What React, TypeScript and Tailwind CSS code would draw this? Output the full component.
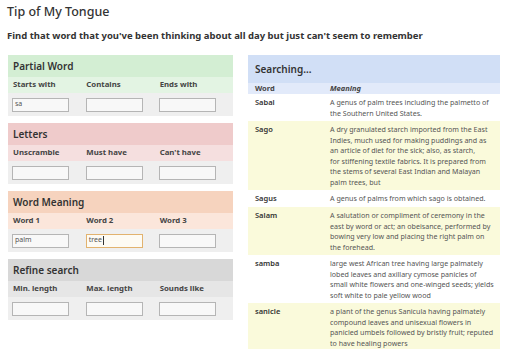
import React from "react";

type Field = { label: string; value?: string; focused?: boolean };
type Panel = { title: string; head: string; sub: string; fields: Field[] };

const panels: Panel[] = [
  {
    title: "Partial Word",
    head: "bg-[#d3eed3]",
    sub: "bg-[#e3f4e3]",
    fields: [{ label: "Starts with", value: "sa" }, { label: "Contains" }, { label: "Ends with" }],
  },
  {
    title: "Letters",
    head: "bg-[#efcbcb]",
    sub: "bg-[#f5dfdf]",
    fields: [{ label: "Unscramble" }, { label: "Must have" }, { label: "Can't have" }],
  },
  {
    title: "Word Meaning",
    head: "bg-[#f6d3be]",
    sub: "bg-[#fbe6db]",
    fields: [
      { label: "Word 1", value: "palm" },
      { label: "Word 2", value: "tree", focused: true },
      { label: "Word 3" },
    ],
  },
  {
    title: "Refine search",
    head: "bg-[#d8d8d8]",
    sub: "bg-[#e6e6e6]",
    fields: [{ label: "Min. length" }, { label: "Max. length" }, { label: "Sounds like" }],
  },
];

// lines kept as they wrap in the original table
const results = [
  { word: "Sabal", lines: ["A genus of palm trees including the palmetto of", "the Southern United States."] },
  {
    word: "Sago",
    lines: [
      "A dry granulated starch imported from the East",
      "Indies, much used for making puddings and as",
      "an article of diet for the sick; also, as starch,",
      "for stiffening textile fabrics. It is prepared from",
      "the stems of several East Indian and Malayan",
      "palm trees, but",
    ],
  },
  { word: "Sagus", lines: ["A genus of palms from which sago is obtained."] },
  {
    word: "Salam",
    lines: [
      "A salutation or compliment of ceremony in the",
      "east by word or act; an obeisance, performed by",
      "bowing very low and placing the right palm on",
      "the forehead.",
    ],
  },
  {
    word: "samba",
    lines: [
      "large west African tree having large palmately",
      "lobed leaves and axillary cymose panicles of",
      "small white flowers and one-winged seeds; yields",
      "soft white to pale yellow wood",
    ],
  },
  {
    word: "sanicle",
    lines: [
      "a plant of the genus Sanicula having palmately",
      "compound leaves and unisexual flowers in",
      "panicled umbels followed by bristly fruit; reputed",
      "to have healing powers",
    ],
  },
];

function SearchPanel({ p }: { p: Panel }) {
  return (
    <div className="mb-[7px]">
      <div className={`${p.head} h-[22px] flex items-center px-[5px] text-[10px] font-semibold text-[#333]`}>
        {p.title}
      </div>
      <div className={`${p.sub} h-[16px] flex items-center pl-[5px] text-[7.8px] font-bold text-[#444]`}>
        {p.fields.map((f) => (
          <span key={f.label} className="w-[75px]">
            {f.label}
          </span>
        ))}
      </div>
      <div className="bg-[#efefef] h-[23px] flex items-center pl-[4px]">
        {p.fields.map((f) => (
          <div key={f.label} className="w-[75px]">
            <div
              className={`w-[57px] h-[14px] border flex items-center px-[2px] text-[7px] text-[#555] ${
                f.focused ? "border-[#e2b36f] bg-[#fdfbf4]" : "border-[#b5b5b5] bg-[#f8f8f8]"
              }`}
            >
              {f.value}
              {f.focused && <span className="w-px h-[9px] bg-[#333] ml-px" />}
            </div>
          </div>
        ))}
      </div>
    </div>
  );
}

export default function App() {
  return (
    <div className="w-[512px] h-[349px] overflow-hidden bg-white font-['Noto_Sans',sans-serif] text-[#333]">
      <h1 className="pl-[7px] pt-[3px] text-[12.5px] leading-[18px] font-medium text-[#333]">Tip of My Tongue</h1>
      <p className="pl-[7px] mt-[9px] text-[9.5px] leading-[12px] font-bold text-[#333]">
        Find that word that you've been thinking about all day but just can't seem to remember
      </p>
      <div className="flex mt-[13px]">
        <div className="w-[225px] ml-[8px]">
          {panels.map((p) => (
            <SearchPanel key={p.title} p={p} />
          ))}
        </div>
        <div className="w-[252px] ml-[15px]">
          <div className="bg-[#d1dff6] h-[28px] flex items-center px-[7px] text-[10px] font-semibold text-[#333]">
            Searching...
          </div>
          <div className="bg-[#e2eafa] h-[11px] flex items-center text-[7.5px] font-bold text-[#444]">
            <span className="w-[82px] pl-[7px]">Word</span>
            <span className="italic">Meaning</span>
          </div>
          {results.map((r, i) => (
            <div key={r.word} className={`flex py-[3px] ${i % 2 ? "bg-[#fafadb]" : "bg-white"}`}>
              <span className="w-[82px] shrink-0 pl-[7px] text-[7.5px] leading-[11px] font-semibold text-[#333]">
                {r.word}
              </span>
              <div className="w-[166px] text-[7.1px] leading-[10.5px] text-[#555] whitespace-nowrap">
                {r.lines.map((l) => (
                  <div key={l}>{l}</div>
                ))}
              </div>
            </div>
          ))}
          <div className="bg-[#e4e9f0] h-[6px]" />
        </div>
      </div>
    </div>
  );
}
